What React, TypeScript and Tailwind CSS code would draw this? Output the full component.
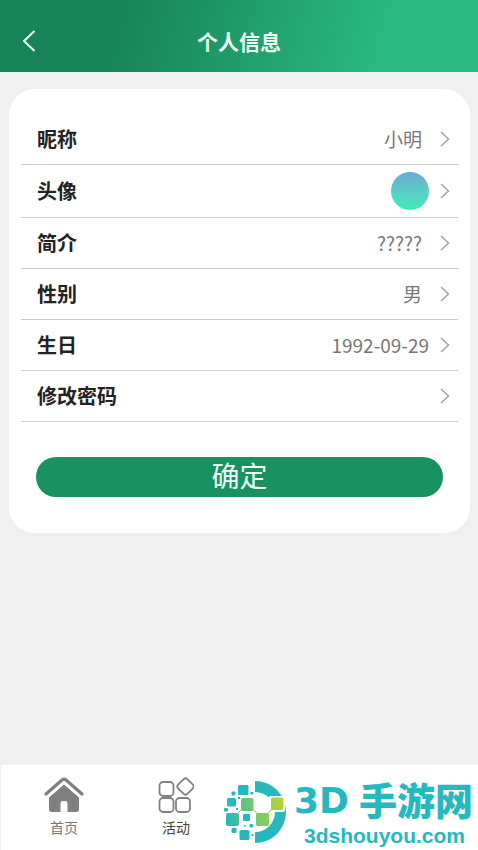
import type { ReactNode } from "react";

function Chevron() {
  return (
    <svg viewBox="0 0 10 16" className="h-4 w-2.5 shrink-0" fill="none" stroke="#a3a3a3" strokeWidth="1.5" aria-hidden="true">
      <path d="M1 1l7.5 7L1 15" />
    </svg>
  );
}

type RowProps = { label: string; gap: string; children?: ReactNode };

function Row({ label, gap, children }: RowProps) {
  return (
    <li className="border-b border-[#cccccc]">
      <button type="button" className="flex min-h-[50px] w-full items-center pr-2 pl-4 text-left">
        <span className="flex-1 text-[20px] leading-6 font-bold text-[#222222]">{label}</span>
        <span className={`text-[19px] leading-6 text-[#777777] ${gap}`}>{children}</span>
        <Chevron />
      </button>
    </li>
  );
}

function HomeIcon() {
  return (
    <svg viewBox="0 0 40 36" className="h-9 w-10" aria-hidden="true">
      <path d="M2 17L18 3q2-1.700 4 0L38 17" fill="none" stroke="#808080" strokeWidth="3.200" strokeLinecap="round" strokeLinejoin="round" />
      <path d="M20 7.500L35 20.500V32q0 3-3 3h-8.500V26q0-2-2-2h-3q-2 0-2 2v9H8q-3 0-3-3V20.500z" fill="#808080" />
    </svg>
  );
}

function ActivityIcon() {
  return (
    <svg viewBox="0 0 36 36" className="size-9" fill="none" stroke="#808080" strokeWidth="1.800" aria-hidden="true">
      <rect x="1.500" y="5" width="14" height="14" rx="3.500" />
      <rect x="1.500" y="21" width="14" height="14" rx="3.500" />
      <rect x="18" y="21" width="14" height="14" rx="3.500" />
      <rect x="21" y="3" width="13" height="13" rx="2.500" transform="rotate(45 27.500 9.500)" />
    </svg>
  );
}

function BrandMark() {
  return (
    <svg viewBox="0 0 64 64" className="size-16 shrink-0" aria-hidden="true">
      <defs>
        <linearGradient id="brand" gradientUnits="userSpaceOnUse" x1="4" y1="40" x2="60" y2="24">
          <stop offset="0" stopColor="#27b9b4" />
          <stop offset=".5" stopColor="#77c86d" />
          <stop offset="1" stopColor="#b8d432" />
        </linearGradient>
      </defs>
      <path d="M31 1a31 31 0 0 1 0 62V52a20 20 0 0 0 0-40z" fill="#25b9bf" />
      <path d="M45 16h14q2 0 2 2v12q0 2-2 2H45z" fill="#fff" />
      <g fill="#25b9bf">
        <rect x="14" y="5" width="10.500" height="10" rx="1.500" />
        <rect x="3" y="18" width="9" height="8.500" rx="1.500" />
        <rect x="19" y="34" width="7" height="7" rx="1" />
        <rect x="15.500" y="50" width="10" height="10" rx="1.500" />
        <rect x="7.500" y="11.500" width="4" height="4" rx="1" />
        <rect x="0" y="28" width="4" height="3.500" rx="1" />
        <rect x="14" y="17" width="2" height="2" />
        <rect x="26.500" y="12" width="2.500" height="2.500" />
        <rect x="12" y="28" width="2" height="2" />
        <rect x="7.500" y="48" width="5" height="5" rx="1" />
        <rect x="25.500" y="44" width="3.500" height="3.500" rx="1" />
        <rect x="27.500" y="54" width="2" height="2" />
        <rect x="20" y="45" width="1.500" height="1.500" />
      </g>
      <path d="M8 39L23 24l16 15 14-16" fill="none" stroke="#79c86c" strokeWidth="1" />
      <g fill="url(#brand)">
        <rect x="2" y="33" width="13" height="13" rx="2" />
        <rect x="17" y="18" width="12.500" height="13" rx="2" />
        <rect x="32" y="33" width="13" height="13" rx="2" />
        <rect x="47" y="17.500" width="12.500" height="12.500" rx="2" />
      </g>
    </svg>
  );
}

export default function App() {
  return (
    <div className="flex min-h-screen flex-col overflow-x-hidden bg-[#f0f0f0] font-['Noto_Sans_CJK_SC',sans-serif]">
      <header className="grid h-[72px] grid-cols-[56px_1fr_56px] items-center bg-[linear-gradient(105deg,#188358_25%,#2ab981_80%)] pt-2.5 text-[#eafff5]">
        <button type="button" aria-label="返回" className="flex h-10 items-center pl-[22px]">
          <svg viewBox="0 0 14 22" className="h-[22px] w-3.5" fill="none" stroke="currentColor" strokeWidth="2" aria-hidden="true">
            <path d="M12.500 1L2 11l10.500 10" />
          </svg>
        </button>
        <h1 className="text-center text-[21px] leading-8 font-bold">个人信息</h1>
      </header>

      <main className="flex-1 px-2 pt-[17px]">
        <form className="ml-px rounded-[26px] bg-white px-3 pt-[25px] pb-9" onSubmit={(e) => e.preventDefault()}>
          <ul>
            <Row label="昵称" gap="mr-[18px]">小明</Row>
            <Row label="头像" gap="mr-[11px]">
              <span className="my-[7px] block size-[38px] rounded-full bg-linear-to-b from-[#6ca9d3] to-[#39edb7]" />
            </Row>
            <Row label="简介" gap="mr-[18px]">?????</Row>
            <Row label="性别" gap="mr-[18px]">男</Row>
            <Row label="生日" gap="mr-[11px]">1992-09-29</Row>
            <Row label="修改密码" gap="mr-[11px]" />
          </ul>
          <div className="mt-[35px] px-[15px]">
            <button type="submit" className="flex h-10 w-full items-center justify-center rounded-full bg-[#199161] pb-1 text-[28px] leading-9 text-[#eafff5]">
              确定
            </button>
          </div>
        </form>
      </main>

      <footer className="ml-px flex h-[85px] items-start bg-white pl-[7px]">
        <nav className="flex shrink-0 text-[14px] leading-5">
          <a href="#home" className="flex w-28 flex-col items-center gap-1 pt-3 text-[#777777]">
            <HomeIcon />
            首页
          </a>
          <a href="#activity" className="flex w-28 flex-col items-center gap-1 pt-3 text-[#444444]">
            <ActivityIcon />
            活动
          </a>
        </nav>
        <div className="-ml-2 flex shrink-0 gap-1.5 pt-[15px] text-[#25b9bf]">
          <BrandMark />
          <div className="flex flex-col items-start whitespace-nowrap">
            <div className="flex h-11 items-start gap-2.5 text-[38px] leading-[42px] font-black">
              <span className="font-['DejaVu_Sans',sans-serif] text-[36px] font-bold">3D</span>
              <span className="leading-[38px]">手游网</span>
            </div>
            <span className="pl-2.5 font-['Liberation_Sans',Arial,sans-serif] text-[21px] leading-6 font-bold">3dshouyou.com</span>
          </div>
        </div>
      </footer>
    </div>
  );
}
